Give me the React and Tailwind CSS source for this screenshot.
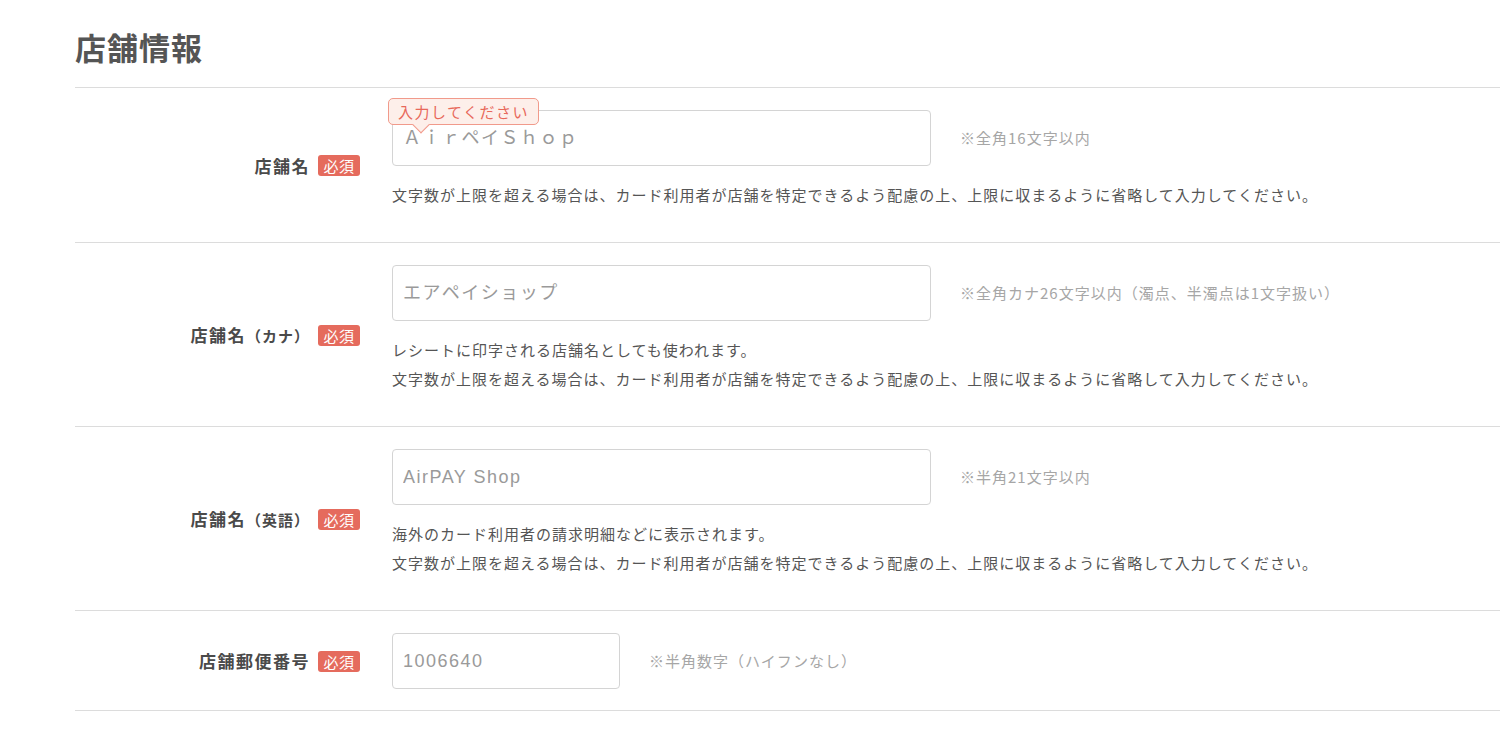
const LONG_NOTE = '文字数が上限を超える場合は、カード利用者が店舗を特定できるよう配慮の上、上限に収まるように省略して入力してください。';

const rows = [
  {
    label: '店舗名',
    sub: '',
    placeholder: 'ＡｉｒペイＳｈｏｐ',
    hint: '※全角16文字以内',
    notes: [LONG_NOTE],
    wide: true,
    tooltip: true,
  },
  {
    label: '店舗名',
    sub: '（カナ）',
    placeholder: 'エアペイショップ',
    hint: '※全角カナ26文字以内（濁点、半濁点は1文字扱い）',
    notes: ['レシートに印字される店舗名としても使われます。', LONG_NOTE],
    wide: true,
  },
  {
    label: '店舗名',
    sub: '（英語）',
    placeholder: 'AirPAY Shop',
    hint: '※半角21文字以内',
    notes: ['海外のカード利用者の請求明細などに表示されます。', LONG_NOTE],
    wide: true,
  },
  {
    label: '店舗郵便番号',
    sub: '',
    placeholder: '1006640',
    hint: '※半角数字（ハイフンなし）',
    notes: [],
    wide: false,
  },
];

function Required() {
  return (
    <span className="inline-flex items-center justify-center h-[21px] w-[42px] rounded-[3px] bg-[#e56b5d] text-white text-[15px] font-normal tracking-[0.5px] leading-none">
      必須
    </span>
  );
}

function Tooltip() {
  return (
    <div className="absolute left-[-4px] top-[-12px] z-10">
      <div className="relative px-[9px] h-[27px] flex items-center rounded-[5px] border border-[#f19a8b] bg-[#fdefea] text-[#e8685a] text-[15px] tracking-[1.5px] leading-none whitespace-nowrap">
        入力してください
        {/* arrow */}
        <span className="absolute left-[26px] bottom-[-7px] w-[12px] h-[12px] rotate-45 border-r border-b border-[#f19a8b] bg-[#fdefea]"></span>
      </div>
    </div>
  );
}

function FormRow({ row }) {
  return (
    <div className="flex items-center border-b border-[#dcdcdc] pt-[22px] pb-[21px]">
      <div className="w-[285px] shrink-0 flex items-center justify-end gap-[8px] text-[#4a4a4a] font-bold">
        <span className="text-[17px] tracking-[1.5px]">
          {row.label}
          {row.sub && <span className="text-[15px] tracking-[1px]">{row.sub}</span>}
        </span>
        <Required />
      </div>
      <div className="ml-[32px] flex-1">
        <div className="flex items-center">
          <div className={`relative ${row.wide ? 'w-[539px]' : 'w-[228px]'}`}>
            {row.tooltip && <Tooltip />}
            <input
              type="text"
              placeholder={row.placeholder}
              className="w-full h-[56px] rounded-[4px] border border-[#d4d4d4] bg-white px-[10px] text-[18px] tracking-[1.5px] font-['Liberation_Sans','Noto_Sans_CJK_JP',sans-serif] text-[#333] placeholder:text-[#9a9a9a] outline-none"
            />
          </div>
          <span className="ml-[29px] text-[15px] tracking-[1px] text-[#a6a6a6]">{row.hint}</span>
        </div>
        {row.notes.length > 0 && (
          <div className="mt-[14px] mb-[12px] text-[15px] tracking-[1px] leading-[29px] text-[#555]">
            {row.notes.map((n, i) => (
              <p key={i}>{n}</p>
            ))}
          </div>
        )}
      </div>
    </div>
  );
}

export default function App() {
  return (
    <div className="w-full min-h-[729px] bg-white pl-[75px] overflow-hidden font-['Noto_Sans_CJK_JP','Noto_Sans',sans-serif]">
      <h1 className="pt-[26px] pb-[19px] text-[31px] tracking-[1px] leading-[42px] font-bold text-[#555]">店舗情報</h1>
      <div className="border-t border-[#dcdcdc]">
        {rows.map((r, i) => (
          <FormRow key={i} row={r} />
        ))}
      </div>
    </div>
  );
}
